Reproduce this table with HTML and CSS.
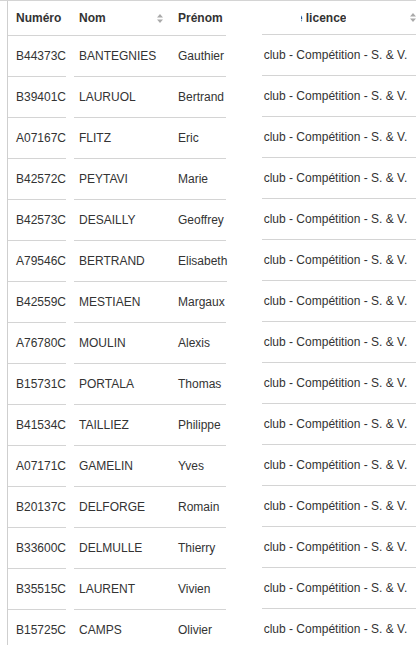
FILE: index.html
```html
<!DOCTYPE html>
<html lang="fr">
<head>
<meta charset="utf-8">
<title>Licenciés</title>
<link rel="stylesheet" href="styles.css">
</head>
<body>
<div class="wrap">
  <div class="fixed">
    <div class="row head">
      <div class="c num">Numéro</div>
      <div class="c nom">Nom <svg class="sort" width="6" height="9" viewBox="0 0 6 9"><path d="M3 0L6 3.5H0Z M3 9L0 5.5H6Z" fill="#aaa"/></svg></div>
      <div class="c pre">Prénom</div>
    </div>
    <div class="row"><div class="c num">B44373C</div><div class="grp"><div class="c nom">BANTEGNIES</div><div class="c pre">Gauthier</div></div></div>
    <div class="row"><div class="c num">B39401C</div><div class="grp"><div class="c nom">LAURUOL</div><div class="c pre">Bertrand</div></div></div>
    <div class="row"><div class="c num">A07167C</div><div class="grp"><div class="c nom">FLITZ</div><div class="c pre">Eric</div></div></div>
    <div class="row"><div class="c num">B42572C</div><div class="grp"><div class="c nom">PEYTAVI</div><div class="c pre">Marie</div></div></div>
    <div class="row"><div class="c num">B42573C</div><div class="grp"><div class="c nom">DESAILLY</div><div class="c pre">Geoffrey</div></div></div>
    <div class="row"><div class="c num">A79546C</div><div class="grp"><div class="c nom">BERTRAND</div><div class="c pre">Elisabeth</div></div></div>
    <div class="row"><div class="c num">B42559C</div><div class="grp"><div class="c nom">MESTIAEN</div><div class="c pre">Margaux</div></div></div>
    <div class="row"><div class="c num">A76780C</div><div class="grp"><div class="c nom">MOULIN</div><div class="c pre">Alexis</div></div></div>
    <div class="row"><div class="c num">B15731C</div><div class="grp"><div class="c nom">PORTALA</div><div class="c pre">Thomas</div></div></div>
    <div class="row"><div class="c num">B41534C</div><div class="grp"><div class="c nom">TAILLIEZ</div><div class="c pre">Philippe</div></div></div>
    <div class="row"><div class="c num">A07171C</div><div class="grp"><div class="c nom">GAMELIN</div><div class="c pre">Yves</div></div></div>
    <div class="row"><div class="c num">B20137C</div><div class="grp"><div class="c nom">DELFORGE</div><div class="c pre">Romain</div></div></div>
    <div class="row"><div class="c num">B33600C</div><div class="grp"><div class="c nom">DELMULLE</div><div class="c pre">Thierry</div></div></div>
    <div class="row"><div class="c num">B35515C</div><div class="grp"><div class="c nom">LAURENT</div><div class="c pre">Vivien</div></div></div>
    <div class="row"><div class="c num">B15725C</div><div class="grp"><div class="c nom">CAMPS</div><div class="c pre">Olivier</div></div></div>
  </div>
  <div class="scroll">
    <div class="inner">
      <div class="rrow rhead"><span class="ht"><span class="htx">Type de licence</span></span><svg class="sort" width="6" height="9" viewBox="0 0 6 9"><path d="M3 0L6 3.5H0Z M3 9L0 5.5H6Z" fill="#aaa"/></svg></div>
      <div class="rrow">Licence club - Compétition - S. &amp; V.</div>
      <div class="rrow">Licence club - Compétition - S. &amp; V.</div>
      <div class="rrow">Licence club - Compétition - S. &amp; V.</div>
      <div class="rrow">Licence club - Compétition - S. &amp; V.</div>
      <div class="rrow">Licence club - Compétition - S. &amp; V.</div>
      <div class="rrow">Licence club - Compétition - S. &amp; V.</div>
      <div class="rrow">Licence club - Compétition - S. &amp; V.</div>
      <div class="rrow">Licence club - Compétition - S. &amp; V.</div>
      <div class="rrow">Licence club - Compétition - S. &amp; V.</div>
      <div class="rrow">Licence club - Compétition - S. &amp; V.</div>
      <div class="rrow">Licence club - Compétition - S. &amp; V.</div>
      <div class="rrow">Licence club - Compétition - S. &amp; V.</div>
      <div class="rrow">Licence club - Compétition - S. &amp; V.</div>
      <div class="rrow">Licence club - Compétition - S. &amp; V.</div>
      <div class="rrow">Licence club - Compétition - S. &amp; V.</div>
    </div>
  </div>
</div>
</body>
</html>
```
FILE: styles.css
```css
html, body {
  margin: 0;
  padding: 0;
  background: #fff;
}
body {
  font-family: "Liberation Sans", Arial, sans-serif;
  font-size: 12px;
  color: #333;
  overflow: hidden;
  height: 645px;
}
.wrap {
  display: flex;
  border-top: 1px solid #d4d4d4;
  gap: 36px;
}
.fixed {
  margin-left: 7px;
  width: 218px;
  border-left: 1px solid #cfcfcf;
  flex: none;
}
.row {
  display: flex;
  height: 41px;
  align-items: stretch;
}
.row.head {
  height: 34px;
  font-weight: bold;
  border-bottom: 1px solid #d4d4d4;
}
.c {
  display: flex;
  align-items: center;
  white-space: nowrap;
}
.num {
  width: 50px;
  padding-left: 8px;
  flex: none;
}
.row:not(.head) .num {
  border-bottom: 1px solid #d4d4d4;
}
.grp {
  display: flex;
  margin-left: 8px;
  flex: 1;
  border-bottom: 1px solid #d4d4d4;
}
.head .nom {
  margin-left: 8px;
}
.nom {
  width: 84px;
  padding-left: 5px;
  padding-right: 11px;
  flex: none;
  justify-content: space-between;
}
.pre {
  padding-left: 4px;
  flex: 1;
}
.sort {
  display: block;
  flex: none;
}
.scroll {
  flex: 1;
  overflow: hidden;
  min-width: 0;
}
.inner {
  margin-left: -45px;
  width: 203px;
}
.rrow {
  height: 40px;
  display: flex;
  align-items: center;
  white-space: nowrap;
  padding-left: 2px;
  border-bottom: 1px solid #d4d4d4;
}
.rrow.rhead {
  height: 33px;
  font-weight: bold;
  padding-left: 84px;
  padding-right: 4px;
  justify-content: space-between;
}
.ht {
  overflow: hidden;
  display: block;
}
.htx {
  display: block;
  margin-left: -43px;
}
```
